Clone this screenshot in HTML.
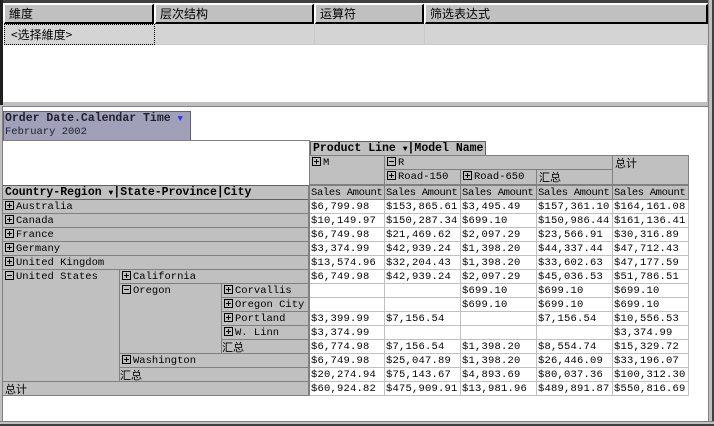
<!DOCTYPE html>
<html><head><meta charset="utf-8"><style>
*{margin:0;padding:0;box-sizing:border-box}
body{width:714px;height:426px;background:#c0c0c0;position:relative;overflow:hidden;font-family:"Liberation Mono","Noto Sans CJK SC",monospace;font-size:10.5px;color:#000}
div{position:absolute;white-space:nowrap;overflow:hidden;line-height:14px}
.h{background:#c0c0c0;border-top:1px solid #fff;border-left:1px solid #fff;border-right:2px solid #000;border-bottom:2px solid #000;font-family:"Noto Sans CJK SC",sans-serif;font-size:12px;padding-left:4px;line-height:17px}
.g{background:#c0c0c0;border-right:1px solid #808080;border-bottom:1px solid #808080;padding-left:2px}
.d{background:#fff;border-right:1px solid #c0c0c0;border-bottom:1px solid #c0c0c0;padding-left:1px;letter-spacing:0.2px}
.s{padding-left:1px;letter-spacing:-0.35px}
.b{font-weight:bold;font-size:11.5px}
.p{display:inline-block;width:9px;height:9px;border:1px solid #000;position:relative;vertical-align:-1px;margin-right:2px}
.p:before{content:"";position:absolute;left:1px;top:3px;width:5px;height:1px;background:#000}
.p.x:after{content:"";position:absolute;left:3px;top:1px;width:1px;height:5px;background:#000}
.cj{font-family:"Noto Sans CJK SC",sans-serif;font-size:11px}
</style></head><body>
<div style="left:0;top:0;width:714px;height:3px;background:#404040"></div>
<div style="left:0;top:0;width:3px;height:105px;background:#202020"></div>
<div style="left:3px;top:3px;width:705px;height:100px;background:#fff;border-right:1px solid #c0c0c0;border-bottom:1px solid #c0c0c0"></div>
<div class="h" style="left:4px;top:4px;width:150px;height:20px">維度</div>
<div class="h" style="left:155px;top:4px;width:159px;height:20px">层次结构</div>
<div class="h" style="left:315px;top:4px;width:109px;height:20px">运算符</div>
<div class="h" style="left:425px;top:4px;width:283px;height:20px">筛选表达式</div>
<div style="left:4px;top:24px;width:704px;height:21px;background:#d4d4d4;border-bottom:1px solid #c8c8c8"></div>
<div style="left:4px;top:24px;width:151px;height:21px;border:1px dotted #000;font-family:'Noto Sans CJK SC',sans-serif;font-size:12px;padding-left:6px;line-height:19px">&lt;选择維度&gt;</div>
<div style="left:314px;top:24px;width:1px;height:21px;background:#c8c8c8"></div>
<div style="left:424px;top:24px;width:1px;height:21px;background:#c8c8c8"></div>
<div style="left:708px;top:0;width:6px;height:426px;background:#c0c0c0;border-left:1px solid #808080;border-right:2px solid #404040"></div>
<div style="left:2px;top:106px;width:706px;height:315px;background:#fff;border-left:1px solid #808080;border-top:1px solid #808080"></div>
<div style="left:0;top:421px;width:714px;height:5px;background:#c0c0c0;border-top:1px solid #808080;border-bottom:2px solid #404040"></div>

<div class="b" style="left:3px;top:111px;width:188px;height:16px;background:#a0a0b8;border:1px solid #606078;padding-left:1px;color:#202030">Order Date.Calendar Time <span style="color:#3030f0;font-size:9px">▼</span></div>
<div style="left:3px;top:126px;width:188px;height:15px;background:#a0a0b8;border:1px solid #606078;border-top:0;padding-left:1px;line-height:13px;color:#202030">February 2002</div>
<div style="left:3px;top:140px;width:307px;height:1px;background:#808080"></div>
<div style="left:309px;top:141px;width:1px;height:44px;background:#808080"></div>

<div class="g b" style="left:310px;top:141px;width:176px;height:15px;border:1px solid #606060;line-height:13px">Product Line <span style="font-size:8px">▼</span>|Model Name</div>
<div class="g" style="left:309px;top:155px;width:76px;height:30px;border-top:1px solid #808080;border-left:1px solid #808080"><span class="p x"></span>M</div>
<div class="g" style="left:385px;top:155px;width:228px;height:15px;border-top:1px solid #808080"><span class="p"></span>R</div>
<div class="g" style="left:385px;top:170px;width:76px;height:15px"><span class="p x"></span>Road-150</div>
<div class="g" style="left:461px;top:170px;width:76px;height:15px"><span class="p x"></span>Road-650</div>
<div class="g cj" style="left:537px;top:170px;width:76px;height:15px">汇总</div>
<div class="g cj" style="left:613px;top:155px;width:76px;height:30px;border-top:1px solid #808080">总计</div>

<div class="g b" style="left:3px;top:185px;width:306px;height:15px;border-top:1px solid #606060;border-bottom:1px solid #606060">Country-Region <span style="font-size:8px">▼</span>|State-Province|City</div>
<div class="g s" style="left:309px;top:185px;width:76px;height:15px;border-top:1px solid #808080;border-left:1px solid #808080">Sales Amount</div>
<div class="g s" style="left:385px;top:185px;width:76px;height:15px;border-top:1px solid #808080">Sales Amount</div>
<div class="g s" style="left:461px;top:185px;width:76px;height:15px;border-top:1px solid #808080">Sales Amount</div>
<div class="g s" style="left:537px;top:185px;width:76px;height:15px;border-top:1px solid #808080">Sales Amount</div>
<div class="g s" style="left:613px;top:185px;width:76px;height:15px;border-top:1px solid #808080">Sales Amount</div>

<div class="g" style="left:3px;top:200px;width:306px;height:14px"><span class="p x"></span>Australia</div>
<div class="g" style="left:3px;top:214px;width:306px;height:14px"><span class="p x"></span>Canada</div>
<div class="g" style="left:3px;top:228px;width:306px;height:14px"><span class="p x"></span>France</div>
<div class="g" style="left:3px;top:242px;width:306px;height:14px"><span class="p x"></span>Germany</div>
<div class="g" style="left:3px;top:256px;width:306px;height:14px"><span class="p x"></span>United Kingdom</div>
<div class="g" style="left:3px;top:270px;width:117px;height:112px"><span class="p"></span>United States</div>
<div class="g" style="left:120px;top:270px;width:189px;height:14px"><span class="p x"></span>California</div>
<div class="g" style="left:120px;top:284px;width:102px;height:70px"><span class="p"></span>Oregon</div>
<div class="g" style="left:222px;top:284px;width:87px;height:14px"><span class="p x"></span>Corvallis</div>
<div class="g" style="left:222px;top:298px;width:87px;height:14px"><span class="p x"></span>Oregon City</div>
<div class="g" style="left:222px;top:312px;width:87px;height:14px"><span class="p x"></span>Portland</div>
<div class="g" style="left:222px;top:326px;width:87px;height:14px"><span class="p x"></span>W. Linn</div>
<div class="g cj" style="left:222px;top:340px;width:87px;height:14px;padding-left:0">汇总</div>
<div class="g" style="left:120px;top:354px;width:189px;height:14px"><span class="p x"></span>Washington</div>
<div class="g cj" style="left:120px;top:368px;width:189px;height:14px;padding-left:0">汇总</div>
<div class="g cj" style="left:3px;top:382px;width:306px;height:14px">总计</div>

<div style="left:309px;top:200px;width:1px;height:196px;background:#808080"></div>

<div class="d" style="left:310px;top:200px;width:75px;height:14px">$6,799.98</div><div class="d" style="left:385px;top:200px;width:76px;height:14px">$153,865.61</div><div class="d" style="left:461px;top:200px;width:76px;height:14px">$3,495.49</div><div class="d" style="left:537px;top:200px;width:76px;height:14px">$157,361.10</div><div class="d" style="left:613px;top:200px;width:76px;height:14px">$164,161.08</div>
<div class="d" style="left:310px;top:214px;width:75px;height:14px">$10,149.97</div><div class="d" style="left:385px;top:214px;width:76px;height:14px">$150,287.34</div><div class="d" style="left:461px;top:214px;width:76px;height:14px">$699.10</div><div class="d" style="left:537px;top:214px;width:76px;height:14px">$150,986.44</div><div class="d" style="left:613px;top:214px;width:76px;height:14px">$161,136.41</div>
<div class="d" style="left:310px;top:228px;width:75px;height:14px">$6,749.98</div><div class="d" style="left:385px;top:228px;width:76px;height:14px">$21,469.62</div><div class="d" style="left:461px;top:228px;width:76px;height:14px">$2,097.29</div><div class="d" style="left:537px;top:228px;width:76px;height:14px">$23,566.91</div><div class="d" style="left:613px;top:228px;width:76px;height:14px">$30,316.89</div>
<div class="d" style="left:310px;top:242px;width:75px;height:14px">$3,374.99</div><div class="d" style="left:385px;top:242px;width:76px;height:14px">$42,939.24</div><div class="d" style="left:461px;top:242px;width:76px;height:14px">$1,398.20</div><div class="d" style="left:537px;top:242px;width:76px;height:14px">$44,337.44</div><div class="d" style="left:613px;top:242px;width:76px;height:14px">$47,712.43</div>
<div class="d" style="left:310px;top:256px;width:75px;height:14px">$13,574.96</div><div class="d" style="left:385px;top:256px;width:76px;height:14px">$32,204.43</div><div class="d" style="left:461px;top:256px;width:76px;height:14px">$1,398.20</div><div class="d" style="left:537px;top:256px;width:76px;height:14px">$33,602.63</div><div class="d" style="left:613px;top:256px;width:76px;height:14px">$47,177.59</div>
<div class="d" style="left:310px;top:270px;width:75px;height:14px">$6,749.98</div><div class="d" style="left:385px;top:270px;width:76px;height:14px">$42,939.24</div><div class="d" style="left:461px;top:270px;width:76px;height:14px">$2,097.29</div><div class="d" style="left:537px;top:270px;width:76px;height:14px">$45,036.53</div><div class="d" style="left:613px;top:270px;width:76px;height:14px">$51,786.51</div>
<div class="d" style="left:310px;top:284px;width:75px;height:14px"></div><div class="d" style="left:385px;top:284px;width:76px;height:14px"></div><div class="d" style="left:461px;top:284px;width:76px;height:14px">$699.10</div><div class="d" style="left:537px;top:284px;width:76px;height:14px">$699.10</div><div class="d" style="left:613px;top:284px;width:76px;height:14px">$699.10</div>
<div class="d" style="left:310px;top:298px;width:75px;height:14px"></div><div class="d" style="left:385px;top:298px;width:76px;height:14px"></div><div class="d" style="left:461px;top:298px;width:76px;height:14px">$699.10</div><div class="d" style="left:537px;top:298px;width:76px;height:14px">$699.10</div><div class="d" style="left:613px;top:298px;width:76px;height:14px">$699.10</div>
<div class="d" style="left:310px;top:312px;width:75px;height:14px">$3,399.99</div><div class="d" style="left:385px;top:312px;width:76px;height:14px">$7,156.54</div><div class="d" style="left:461px;top:312px;width:76px;height:14px"></div><div class="d" style="left:537px;top:312px;width:76px;height:14px">$7,156.54</div><div class="d" style="left:613px;top:312px;width:76px;height:14px">$10,556.53</div>
<div class="d" style="left:310px;top:326px;width:75px;height:14px">$3,374.99</div><div class="d" style="left:385px;top:326px;width:76px;height:14px"></div><div class="d" style="left:461px;top:326px;width:76px;height:14px"></div><div class="d" style="left:537px;top:326px;width:76px;height:14px"></div><div class="d" style="left:613px;top:326px;width:76px;height:14px">$3,374.99</div>
<div class="d" style="left:310px;top:340px;width:75px;height:14px">$6,774.98</div><div class="d" style="left:385px;top:340px;width:76px;height:14px">$7,156.54</div><div class="d" style="left:461px;top:340px;width:76px;height:14px">$1,398.20</div><div class="d" style="left:537px;top:340px;width:76px;height:14px">$8,554.74</div><div class="d" style="left:613px;top:340px;width:76px;height:14px">$15,329.72</div>
<div class="d" style="left:310px;top:354px;width:75px;height:14px">$6,749.98</div><div class="d" style="left:385px;top:354px;width:76px;height:14px">$25,047.89</div><div class="d" style="left:461px;top:354px;width:76px;height:14px">$1,398.20</div><div class="d" style="left:537px;top:354px;width:76px;height:14px">$26,446.09</div><div class="d" style="left:613px;top:354px;width:76px;height:14px">$33,196.07</div>
<div class="d" style="left:310px;top:368px;width:75px;height:14px">$20,274.94</div><div class="d" style="left:385px;top:368px;width:76px;height:14px">$75,143.67</div><div class="d" style="left:461px;top:368px;width:76px;height:14px">$4,893.69</div><div class="d" style="left:537px;top:368px;width:76px;height:14px">$80,037.36</div><div class="d" style="left:613px;top:368px;width:76px;height:14px">$100,312.30</div>
<div class="d" style="left:310px;top:382px;width:75px;height:14px">$60,924.82</div><div class="d" style="left:385px;top:382px;width:76px;height:14px">$475,909.91</div><div class="d" style="left:461px;top:382px;width:76px;height:14px">$13,981.96</div><div class="d" style="left:537px;top:382px;width:76px;height:14px">$489,891.87</div><div class="d" style="left:613px;top:382px;width:76px;height:14px">$550,816.69</div>
</body></html>
